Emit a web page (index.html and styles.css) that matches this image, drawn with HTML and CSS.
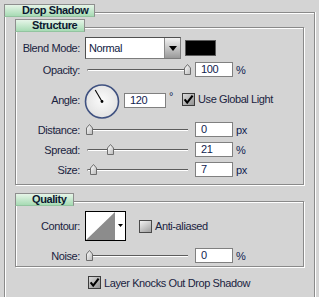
FILE: index.html
```html
<!DOCTYPE html>
<html>
<head>
<meta charset="utf-8">
<title>Drop Shadow</title>
<link rel="stylesheet" href="styles.css">
</head>
<body>
<div class="group outer">
  <div class="tab tab-main">Drop Shadow</div>

  <div class="group inner structure">
    <div class="tab tab-structure">Structure</div>

    <div class="row row-blend">
      <span class="label">Blend Mode:</span>
      <div class="select">
        <span class="select-text">Normal</span>
        <span class="select-btn"><svg width="8" height="5" viewBox="0 0 8 5"><polygon points="0,0 8,0 4,5" fill="#000"/></svg></span>
      </div>
      <span class="swatch"></span>
    </div>

    <div class="row row-slider row-opacity">
      <span class="label">Opacity:</span>
      <div class="slider" style="--v:1"><span class="track"></span><svg class="thumb" width="7" height="11" viewBox="0 0 7 11"><defs><linearGradient id="tg1" x1="0" y1="0" x2="1" y2="1"><stop offset="0" stop-color="#ffffff"/><stop offset="1" stop-color="#b9b9b9"/></linearGradient></defs><polygon points="0.5,4 3.5,0.5 6.5,4 6.5,10.5 0.5,10.5" fill="url(#tg1)" stroke="#6e6e6e"/></svg></div>
      <span class="field">100</span>
      <span class="unit">%</span>
    </div>

    <div class="row row-angle">
      <span class="label">Angle:</span>
      <svg class="dial" width="36" height="36" viewBox="0 0 36 36">
        <defs><radialGradient id="dg" cx="0.5" cy="0.45" r="0.55"><stop offset="0" stop-color="#fbfbfb"/><stop offset="1" stop-color="#e2e2e2"/></radialGradient></defs>
        <circle cx="18" cy="17.5" r="16.5" fill="url(#dg)" stroke="#3f5180" stroke-width="1.6"/>
        <line x1="18" y1="17.5" x2="11.2" y2="6" stroke="#000" stroke-width="1.1"/>
        <circle cx="18" cy="17.5" r="1.4" fill="#000"/>
      </svg>
      <span class="field field-angle">120</span>
      <span class="deg">°</span>
      <span class="check check-global"><svg width="13" height="13" viewBox="0 0 13 13"><defs><linearGradient id="cg1" x1="0" y1="0" x2="1" y2="1"><stop offset="0" stop-color="#dedede"/><stop offset="1" stop-color="#8e8e8e"/></linearGradient></defs><rect x="0.5" y="0.5" width="12" height="12" fill="url(#cg1)" stroke="#3c3c3c"/><path d="M2.6 6.4 L5.2 9.6 L10.6 2.6" fill="none" stroke="#000" stroke-width="2.1"/></svg></span>
      <span class="check-label">Use Global Light</span>
    </div>

    <div class="row row-slider row-distance">
      <span class="label">Distance:</span>
      <div class="slider" style="--v:0"><span class="track"></span><svg class="thumb" width="7" height="11" viewBox="0 0 7 11"><defs><linearGradient id="tg2" x1="0" y1="0" x2="1" y2="1"><stop offset="0" stop-color="#ffffff"/><stop offset="1" stop-color="#b9b9b9"/></linearGradient></defs><polygon points="0.5,4 3.5,0.5 6.5,4 6.5,10.5 0.5,10.5" fill="url(#tg2)" stroke="#6e6e6e"/></svg></div>
      <span class="field">0</span>
      <span class="unit">px</span>
    </div>

    <div class="row row-slider row-spread">
      <span class="label">Spread:</span>
      <div class="slider" style="--v:0.21"><span class="track"></span><svg class="thumb" width="7" height="11" viewBox="0 0 7 11"><defs><linearGradient id="tg3" x1="0" y1="0" x2="1" y2="1"><stop offset="0" stop-color="#ffffff"/><stop offset="1" stop-color="#b9b9b9"/></linearGradient></defs><polygon points="0.5,4 3.5,0.5 6.5,4 6.5,10.5 0.5,10.5" fill="url(#tg3)" stroke="#6e6e6e"/></svg></div>
      <span class="field">21</span>
      <span class="unit">%</span>
    </div>

    <div class="row row-slider row-size">
      <span class="label">Size:</span>
      <div class="slider" style="--v:0.045"><span class="track"></span><svg class="thumb" width="7" height="11" viewBox="0 0 7 11"><defs><linearGradient id="tg4" x1="0" y1="0" x2="1" y2="1"><stop offset="0" stop-color="#ffffff"/><stop offset="1" stop-color="#b9b9b9"/></linearGradient></defs><polygon points="0.5,4 3.5,0.5 6.5,4 6.5,10.5 0.5,10.5" fill="url(#tg4)" stroke="#6e6e6e"/></svg></div>
      <span class="field">7</span>
      <span class="unit">px</span>
    </div>
  </div>

  <div class="group inner quality">
    <div class="tab tab-quality">Quality</div>

    <div class="row row-contour">
      <span class="label">Contour:</span>
      <svg class="contour" width="41" height="30" viewBox="0 0 41 30">
        <rect x="0.5" y="0.5" width="40" height="29" fill="#fff" stroke="#000"/>
        <polygon points="1,29 30,1 30,29" fill="#8c8c8c"/>
        <polygon points="33,13 38,13 35.5,16" fill="#000"/>
      </svg>
      <span class="check check-aa"><svg width="13" height="13" viewBox="0 0 13 13"><defs><linearGradient id="cg2" x1="0" y1="0" x2="0.6" y2="1"><stop offset="0" stop-color="#f6f6f6"/><stop offset="1" stop-color="#a8a8a8"/></linearGradient></defs><rect x="0.5" y="0.5" width="12" height="12" fill="url(#cg2)" stroke="#4a4a4a"/></svg></span>
      <span class="check-label">Anti-aliased</span>
    </div>

    <div class="row row-slider row-noise">
      <span class="label">Noise:</span>
      <div class="slider" style="--v:0"><span class="track"></span><svg class="thumb" width="7" height="11" viewBox="0 0 7 11"><defs><linearGradient id="tg5" x1="0" y1="0" x2="1" y2="1"><stop offset="0" stop-color="#ffffff"/><stop offset="1" stop-color="#b9b9b9"/></linearGradient></defs><polygon points="0.5,4 3.5,0.5 6.5,4 6.5,10.5 0.5,10.5" fill="url(#tg5)" stroke="#6e6e6e"/></svg></div>
      <span class="field">0</span>
      <span class="unit">%</span>
    </div>
  </div>

  <div class="row row-knock">
    <span class="check"><svg width="13" height="13" viewBox="0 0 13 13"><defs><linearGradient id="cg3" x1="0" y1="0" x2="1" y2="1"><stop offset="0" stop-color="#dedede"/><stop offset="1" stop-color="#8e8e8e"/></linearGradient></defs><rect x="0.5" y="0.5" width="12" height="12" fill="url(#cg3)" stroke="#3c3c3c"/><path d="M2.6 6.4 L5.2 9.6 L10.6 2.6" fill="none" stroke="#000" stroke-width="2.1"/></svg></span>
    <span class="check-label">Layer Knocks Out Drop Shadow</span>
  </div>
</div>
</body>
</html>
```

FILE: styles.css
```css
* { box-sizing: border-box; }

html, body {
  margin: 0;
  padding: 0;
}

body {
  width: 319px;
  height: 297px;
  overflow: hidden;
  background: #d4d4d4;
  font-family: "Liberation Sans", Arial, sans-serif;
  font-size: 11px;
  letter-spacing: -0.4px;
  color: #1a2340;
}

.group {
  border: 1px solid #8a8a8a;
  box-shadow: inset 1px 1px 0 #ffffff, 1px 1px 0 #ffffff;
}

.outer {
  margin: 12px 0 0 4px;
  width: 311px;
  height: 285px;
  border-bottom: none;
  box-shadow: inset 1px 1px 0 #ffffff, 1px 0 0 #ffffff;
}

.tab {
  height: 13px;
  margin: -9px 0 0 -1px;
  padding: 0 0 0 17px;
  background: linear-gradient(#e6f5e8, #a7dbb4);
  border: 1px solid #8e8e8e;
  border-bottom-color: #93c4a0;
  font-weight: bold;
  line-height: 11px;
  color: #0b1730;
  white-space: nowrap;
}

.tab-main { width: 91px; }
.tab-structure { width: 70px; padding-left: 16px; }
.tab-quality { width: 59px; padding-left: 16px; }

.inner {
  margin-left: 10px;
  width: 289px;
}

.structure {
  margin-top: 10px;
  height: 158px;
}

.quality {
  margin-top: 16px;
  height: 66px;
}

.row {
  display: flex;
  align-items: center;
}

.label {
  width: 64px;
  margin-right: 5px;
  text-align: right;
  white-space: nowrap;
}

/* blend mode */
.row-blend {
  height: 22px;
  margin-top: 5px;
}

.select {
  display: flex;
  width: 96px;
  height: 22px;
  background: #fff;
  border: 1px solid #7c7c7c;
  border-top-color: #505050;
  border-left-color: #505050;
}

.select-text {
  flex: 1;
  padding-left: 3px;
  line-height: 20px;
  color: #101c44;
}

.select-btn {
  width: 16px;
  display: flex;
  align-items: center;
  justify-content: center;
  background: linear-gradient(#f2f2f2, #9a9a9a);
  border-left: 1px solid #8a8a8a;
}

.swatch {
  width: 31px;
  height: 16px;
  margin-left: 4px;
  background: #000;
  border: 1px solid #5a5a5a;
}

/* sliders */
.row-slider { height: 15px; }
.row-opacity { margin-top: 3px; }
.row-distance { margin-top: 2px; }
.row-spread { margin-top: 5px; }
.row-size { margin-top: 5px; }
.row-noise { margin-top: 7px; }

.slider {
  position: relative;
  width: 101px;
  height: 15px;
  margin-left: 2px;
  padding-top: 7px;
}

.track {
  display: block;
  height: 2px;
  border-top: 1px solid #5c5c5c;
  border-left: 1px solid #5c5c5c;
  border-bottom: 1px solid #ffffff;
  border-radius: 2px 0 0 0;
}

.thumb {
  position: absolute;
  top: 2px;
  left: calc(-1px + var(--v) * 98px);
}

.field {
  width: 38px;
  height: 15px;
  margin-left: 7px;
  padding-left: 5px;
  background: #fff;
  border: 1px solid #808080;
  line-height: 13px;
  color: #101c50;
}

.unit {
  margin-left: 3px;
  color: #101c50;
}

/* angle */
.row-angle {
  height: 35px;
  margin-top: 8px;
  align-items: flex-start;
}

.row-angle .label {
  margin-top: 8px;
  line-height: 15px;
}

.dial {
  margin-left: -1px;
  margin-top: -1px;
}

.field-angle {
  width: 42px;
  margin-left: 4px;
  margin-top: 8px;
}

.deg {
  margin-left: 3px;
  margin-top: 5px;
  color: #101c50;
}

.check {
  display: block;
  width: 13px;
  height: 13px;
}

.check svg { display: block; }

.check-global {
  margin-left: 9px;
  margin-top: 8px;
}

.row-angle .check-label {
  margin-top: 8px;
  line-height: 13px;
}

.check-label {
  margin-left: 3px;
  white-space: nowrap;
}

/* quality */
.row-contour {
  height: 30px;
  margin-top: 5px;
}

.check-aa {
  margin-left: 13px;
}

.row-knock {
  height: 13px;
  margin-top: 9px;
  margin-left: 83px;
}
```
